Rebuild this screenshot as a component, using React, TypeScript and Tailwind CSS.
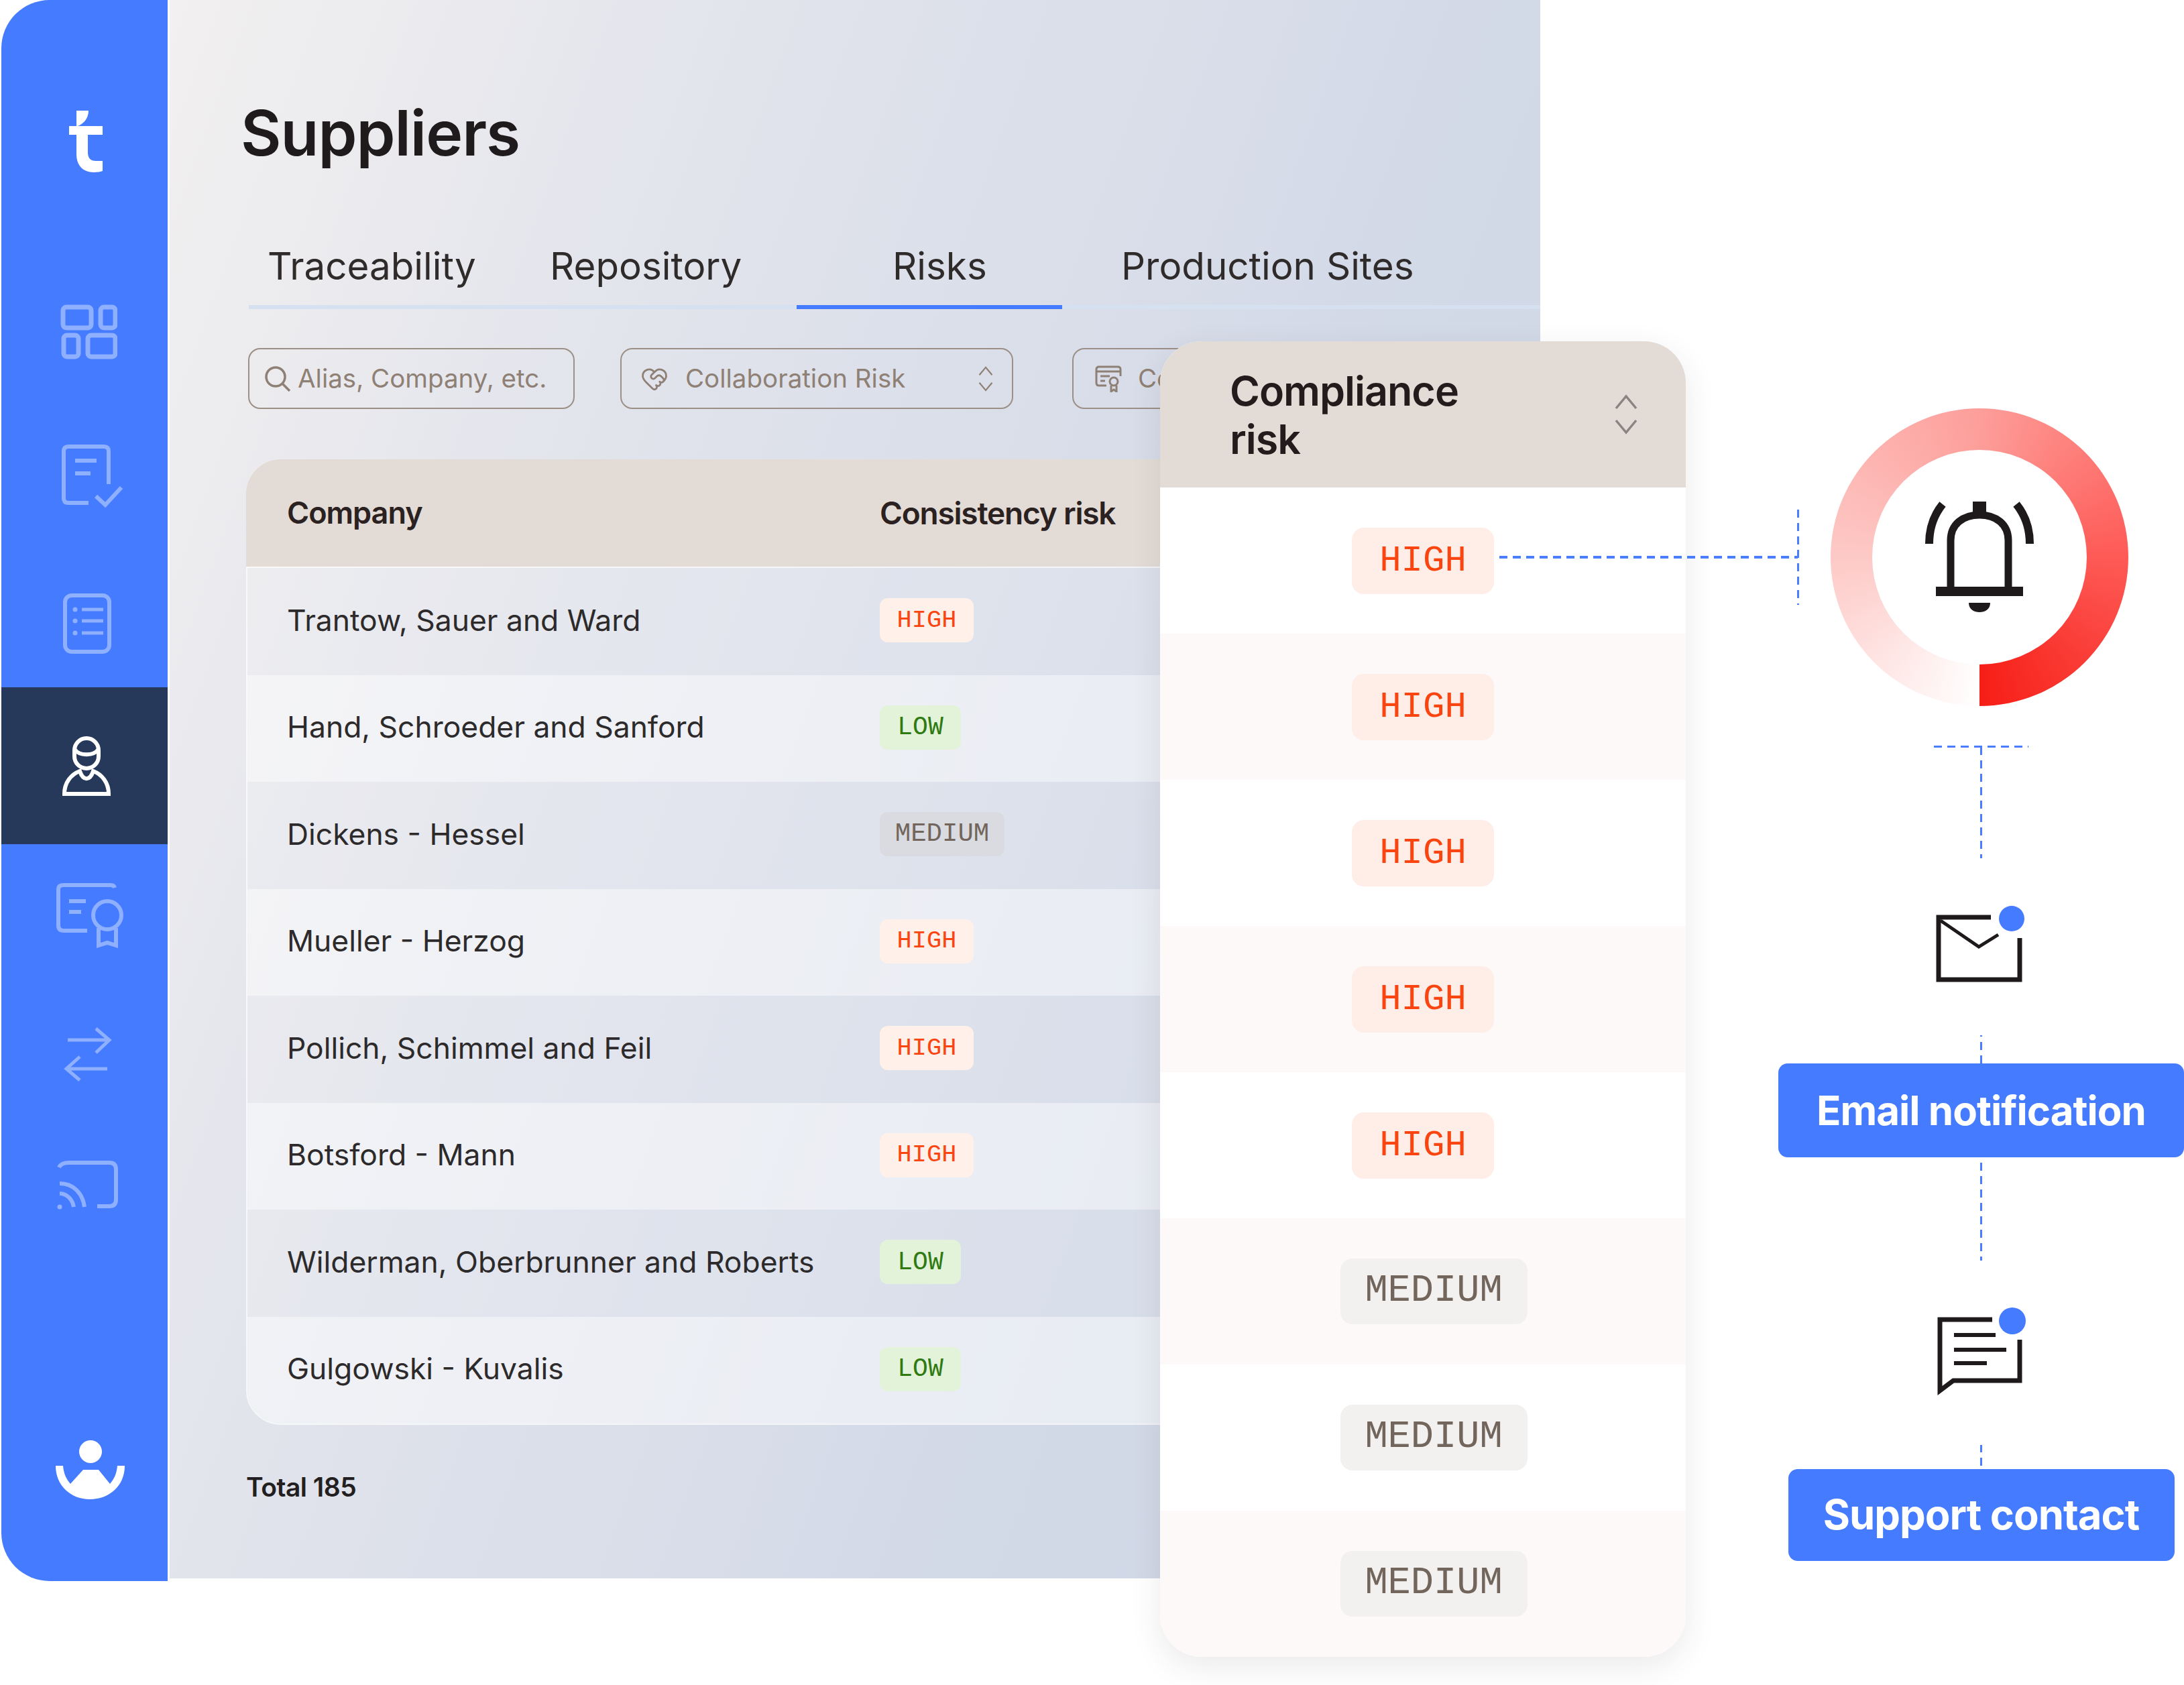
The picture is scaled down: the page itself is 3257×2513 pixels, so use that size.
import { HeartHandshake } from "lucide-react";

const rows = [
  { name: "Trantow, Sauer and Ward", risk: "HIGH" },
  { name: "Hand, Schroeder and Sanford", risk: "LOW" },
  { name: "Dickens - Hessel", risk: "MEDIUM" },
  { name: "Mueller - Herzog", risk: "HIGH" },
  { name: "Pollich, Schimmel and Feil", risk: "HIGH" },
  { name: "Botsford - Mann", risk: "HIGH" },
  { name: "Wilderman, Oberbrunner and Roberts", risk: "LOW" },
  { name: "Gulgowski - Kuvalis", risk: "LOW" },
];

const compliance = ["HIGH", "HIGH", "HIGH", "HIGH", "HIGH", "MEDIUM", "MEDIUM", "MEDIUM"];

function RiskBadge({ risk }: { risk: string }) {
  const tone =
    risk === "HIGH"
      ? "bg-[#fff0e9] text-[#fb4510] w-[140px] text-[37px]"
      : risk === "LOW"
        ? "bg-[#e3f3d9] text-[#2f7a12] w-[121px] text-[38px]"
        : "bg-[#d9dbe1] text-[#72655c] w-[186px] text-[39px]";
  return (
    <span
      className={`flex h-[66px] items-center justify-center rounded-[12px] [font-family:'Liberation_Mono',monospace] ${tone}`}
    >
      {risk}
    </span>
  );
}

function LargeBadge({ risk }: { risk: string }) {
  const tone =
    risk === "HIGH"
      ? "bg-[#ffede7] text-[#fb4510] w-[212px] h-[99px] text-[54px]"
      : "bg-[#f3f0f0] text-[#72655c] w-[279px] h-[98px] ml-[32px] text-[57px]";
  return (
    <span
      className={`flex items-center justify-center rounded-[18px] [font-family:'Liberation_Mono',monospace] ${tone}`}
    >
      {risk}
    </span>
  );
}

function Chevrons({ className }: { className?: string }) {
  return (
    <svg viewBox="0 0 36 60" fill="none" stroke="currentColor" strokeWidth="3.5" className={className}>
      <path d="M3 21 18 3l15 18" />
      <path d="M3 39l15 18 15-18" />
    </svg>
  );
}

function Sidebar() {
  return (
    <aside className="flex h-[2358px] w-[248px] flex-col rounded-l-[72px] bg-[#457bff] text-[#8fb0ff]">
      <div className="pl-[101px] pt-[165px]">
        <svg width="50" height="94" viewBox="0 0 50 94" fill="#fff">
          <path d="M11 0H29C29 12 21 20 13 23H50V36H28V62C28 71 32 75 40 75H50V90C47 91 42 92 37 92C21 92 11 82 11 65V36H0V23H11Z" />
        </svg>
      </div>
      <div className="pl-[88px] pt-[194px]">
        <svg width="85" height="83" viewBox="0 0 85 83" fill="none" stroke="currentColor" strokeWidth="7">
          <rect x="4" y="5" width="42" height="31" rx="5" />
          <rect x="60" y="5" width="22" height="31" rx="5" />
          <rect x="5" y="47" width="22" height="32" rx="5" />
          <rect x="41" y="47" width="41" height="32" rx="5" />
        </svg>
      </div>
      <div className="pl-[88px] pt-[125px]">
        <svg width="96" height="100" viewBox="0 0 96 100" fill="none" stroke="currentColor" strokeWidth="6">
          <path d="M42 89H12Q5 89 5 82V12Q5 5 12 5H65Q72 5 72 12V61" />
          <path d="M22 26H54M22 45H45" />
          <path d="M53 79 67 92 91 66" />
        </svg>
      </div>
      <div className="pl-[90px] pt-[122px]">
        <svg width="76" height="93" viewBox="0 0 76 93" fill="none" stroke="currentColor" strokeWidth="6">
          <rect x="5" y="5" width="66" height="84" rx="10" />
          <path d="M30 26H62M30 43H62M30 61H62" strokeWidth="5" />
          <circle cx="20" cy="26" r="3.5" fill="currentColor" stroke="none" />
          <circle cx="20" cy="43" r="3.5" fill="currentColor" stroke="none" />
          <circle cx="20" cy="61" r="3.5" fill="currentColor" stroke="none" />
        </svg>
      </div>
      <div className="mt-[49px] flex h-[234px] w-full items-start bg-[#27395a] pl-[88px] pt-[70px]">
        <svg width="78" height="95" viewBox="0 0 78 95" fill="none" stroke="#fff" strokeWidth="6">
          <rect x="21" y="6" width="36" height="45" rx="18" />
          <path d="M21 22C28 33 50 33 57 22" />
          <path d="M6 89H72C72 72 62 60 49 55C44 70 34 70 29 55C16 60 6 72 6 89Z" />
        </svg>
      </div>
      <div className="pl-[81px] pt-[57px]">
        <svg width="104" height="100" viewBox="0 0 104 100" fill="none" stroke="currentColor" strokeWidth="6">
          <path d="M47 72H12Q4 72 4 64V10Q4 4 12 4H82Q87 4 88 8" />
          <path d="M20 28H45M20 44H38" />
          <circle cx="77" cy="49" r="21" />
          <path d="M64 68V94L77 90 90 94V68" />
        </svg>
      </div>
      <div className="pl-[93px] pt-[114px]">
        <svg width="74" height="86" viewBox="0 0 74 86" fill="none" stroke="currentColor" strokeWidth="5">
          <path d="M6 21H68M48 4 68 21 48 40" />
          <path d="M65 64H4M24 46 4 64 24 81" />
        </svg>
      </div>
      <div className="pl-[81px] pt-[113px]">
        <svg width="98" height="78" viewBox="0 0 98 78" fill="none" stroke="currentColor" strokeWidth="6">
          <path d="M5 12Q8 5 20 5H80Q90 5 90 15V60Q90 70 80 70H62" />
          <path d="M6 36C26 36 40 50 43 71" />
          <path d="M6 51C17 51 25 60 27 71" />
          <circle cx="6" cy="71" r="3.5" fill="currentColor" stroke="none" />
        </svg>
      </div>
      <div className="pl-[81px] pt-[341px]">
        <svg width="103" height="88" viewBox="0 0 103 88" fill="#fff">
          <circle cx="52" cy="17" r="17" />
          <path d="M0 38H11C12 50 16 58 22 65L41 44H64L81 65C87 58 91 50 92 38H103C103 68 80 88 51 88C23 88 0 68 0 38Z" />
        </svg>
      </div>
    </aside>
  );
}

function FilterBox({ className, children }: { className?: string; children: React.ReactNode }) {
  return (
    <div
      className={`flex h-[91px] shrink-0 items-center rounded-[18px] border-2 border-[#9c8f85] text-[38.5px] text-[#8f8075] ${className ?? ""}`}
    >
      {children}
    </div>
  );
}

function Main() {
  return (
    <main className="ml-[3px] flex h-[2354px] w-[2044px] flex-col overflow-hidden bg-[linear-gradient(110deg,#f2f0f0_0%,#e2e4ec_30%,#d2d9e7_70%,#cfd7e6_100%)] pt-[2px]">
      <h1 className="ml-[106px] mt-[138px] text-[93px] leading-[116px] font-semibold tracking-[-1px] text-[#1f1b1c]">
        Suppliers
      </h1>

      <div className="ml-[118px] mt-[82px] flex h-[123px] items-start border-b-[6px] border-[#d5e1f0] text-[56.5px] text-[#2f2b2b]">
        <div className="h-[123px] w-[421px] pl-[28px] pt-[17px]">Traceability</div>
        <div className="h-[123px] w-[396px] pl-[28px] pt-[17px]">Repository</div>
        <div className="h-[123px] w-[396px] border-b-[6px] border-[#457bff] pl-[143px] pt-[17px]">Risks</div>
        <div className="h-[123px] pl-[88px] pt-[17px]">Production Sites</div>
      </div>

      <div className="ml-[117px] mt-[58px] flex text-nowrap">
        <FilterBox className="w-[487px] pl-[22px]">
          <svg width="40" height="38" viewBox="0 0 40 38" fill="none" stroke="#8f8075" strokeWidth="3.5">
            <circle cx="17" cy="16" r="14" />
            <path d="M27 26 38 37" />
          </svg>
          <span className="ml-[10px]">Alias, Company, etc.</span>
        </FilterBox>
        <FilterBox className="ml-[68px] w-[586px] pl-[28px]">
          <HeartHandshake size={42} strokeWidth={1.6} />
          <span className="ml-[25px]">Collaboration Risk</span>
          <Chevrons className="ml-auto mr-[27px] h-[38px] w-[24px]" />
        </FilterBox>
        <FilterBox className="ml-[88px] w-[240px] pl-[32px]">
          <svg width="42" height="40" viewBox="0 0 42 40" fill="none" stroke="#8f8075" strokeWidth="3" className="shrink-0">
            <path d="M17 30H6Q2 30 2 26V6Q2 2 6 2H34Q38 2 38 6V16" />
            <path d="M2 9H38M8 16H22M8 23H15" />
            <circle cx="28" cy="24" r="6" />
            <path d="M24 30V39L28 36 32 39V30" />
          </svg>
          <span className="ml-[22px]">Ce</span>
        </FilterBox>
      </div>

      <div className="ml-[114px] mt-[75px] w-[1500px]">
        <div className="flex h-[160px] items-center rounded-t-[52px] bg-[#e3dbd6] pl-[61px] font-semibold text-[#2a2120]">
          <span className="w-[884px] text-[45px] tracking-[-1px]">Company</span>
          <span className="text-[46px] tracking-[-1.2px]">Consistency risk</span>
        </div>
        <div className="flex h-[1280px] flex-col overflow-hidden rounded-b-[52px] border-2 border-white/70 text-[44.4px] text-[#2d2a2b]">
          {rows.map((row, i) => (
            <div
              key={row.name}
              className={`flex flex-1 items-center pb-[3px] pl-[59px] ${i % 2 === 0 ? "bg-white/15" : "bg-white/50"}`}
            >
              <span className="w-[884px]">{row.name}</span>
              <RiskBadge risk={row.risk} />
            </div>
          ))}
        </div>
      </div>

      <p className="ml-[114px] mt-[64px] text-[39px] font-semibold tracking-[-0.5px] text-[#231f20]">Total 185</p>
    </main>
  );
}

function ComplianceCard() {
  return (
    <section className="absolute left-[1730px] top-[509px] w-[784px] overflow-hidden rounded-[62px] bg-white shadow-[0_14px_46px_rgba(70,50,50,0.10)]">
      <div className="flex h-[218px] items-center bg-[#e3dbd6] pl-[104px] pr-[71px]">
        <h2 className="mt-[2px] w-[400px] text-[61px] leading-[72px] font-semibold tracking-[-1px] text-[#231c1c]">
          Compliance risk
        </h2>
        <Chevrons className="ml-auto h-[60px] w-[36px] text-[#8a8580]" />
      </div>
      {compliance.map((risk, i) => (
        <div
          key={i}
          className={`flex h-[218px] items-center justify-center ${i % 2 === 0 ? "bg-white" : "bg-[#fdf9f9]"}`}
        >
          <LargeBadge risk={risk} />
        </div>
      ))}
    </section>
  );
}

function AlertFlow() {
  return (
    <>
      {/* connectors */}
      <div className="absolute left-[2236px] top-[829px] h-[4px] w-[445px] bg-[repeating-linear-gradient(90deg,#4a7dff_0,#4a7dff_12px,transparent_12px,transparent_20px)]" />
      <div className="absolute left-[2680px] top-[760px] h-[142px] w-[3px] bg-[repeating-linear-gradient(180deg,#4a7dff_0,#4a7dff_12px,transparent_12px,transparent_20px)]" />
      <div className="absolute left-[2953px] top-[1114px] h-[1076px] w-[3px] bg-[repeating-linear-gradient(180deg,#4a7dff_0,#4a7dff_12px,transparent_12px,transparent_20px)]" />

      <div className="absolute left-[2652px] top-[609px] flex w-[605px] flex-col items-center">
        <div className="mr-[5px] flex h-[444px] w-[444px] items-center justify-center rounded-full bg-[conic-gradient(from_180deg,#ffffff_0%,#fdc9c6_25%,#fd9e9a_50%,#fe5a56_75%,#f61e16_100%)]">
          <div className="flex h-[320px] w-[320px] items-center justify-center rounded-full bg-white">
            <svg width="170" height="170" viewBox="0 0 170 170" fill="none" stroke="#1e1a1b">
              <path d="M42 131V60C42 36 60 22 85 22C110 22 128 36 128 60V131" strokeWidth="11" />
              <path d="M10 65C10 42 17 22 30 6M160 65C160 42 153 22 140 6" strokeWidth="12" />
              <rect x="75" y="2" width="20" height="18" fill="#1e1a1b" stroke="none" />
              <rect x="20" y="129" width="130" height="14" fill="#1e1a1b" stroke="none" />
              <path d="M69 153H101C101 163 93 167 85 167C77 167 69 163 69 153Z" fill="#1e1a1b" stroke="none" />
            </svg>
          </div>
        </div>
        <div className="mt-[59px] h-[3px] w-[141px] bg-[repeating-linear-gradient(90deg,#4a7dff_0,#4a7dff_12px,transparent_12px,transparent_20px)]" />

        <div className="relative mt-[165px] flex h-[264px] w-[293px] items-center justify-center rounded-full bg-white">
          <div className="relative mt-[8px]">
            <svg width="140" height="110" viewBox="0 0 140 110" fill="none" stroke="#1e1a1b">
              <path d="M84 7H6V100H127V38" strokeWidth="7" />
              <path d="M9 12 66 51 95 33" strokeWidth="5" />
            </svg>
            <span className="absolute left-[96px] top-[-10px] h-[38px] w-[38px] rounded-full bg-[#457bff]" />
          </div>
        </div>

        <div className="relative mt-[42px] flex h-[140px] w-full items-center justify-center rounded-[14px] bg-[#457bff] text-[60px] font-bold tracking-[-1px] text-white">
          Email notification
        </div>

        <div className="relative mt-[154px] flex h-[275px] w-[293px] items-center justify-center rounded-full bg-white">
          <div className="relative mt-[10px]">
            <svg width="140" height="124" viewBox="0 0 140 124" fill="none" stroke="#1e1a1b">
              <path d="M86 7H8V113L28 98H127V37" strokeWidth="7" />
              <path d="M29 30H91M29 52H107M29 72H78" strokeWidth="6" />
            </svg>
            <span className="absolute left-[96px] top-[-11px] h-[40px] w-[40px] rounded-full bg-[#457bff]" />
          </div>
        </div>

        <div className="relative mt-[36px] flex h-[137px] w-[576px] items-center justify-center rounded-[14px] bg-[#457bff] text-[61.5px] font-bold tracking-[-1px] text-white">
          Support contact
        </div>
      </div>
    </>
  );
}

export default function App() {
  return (
    <div className="relative flex h-[2513px] w-[3257px] items-start overflow-hidden bg-white pl-[2px] [font-family:Inter,sans-serif]">
      <Sidebar />
      <Main />
      <ComplianceCard />
      <AlertFlow />
    </div>
  );
}
